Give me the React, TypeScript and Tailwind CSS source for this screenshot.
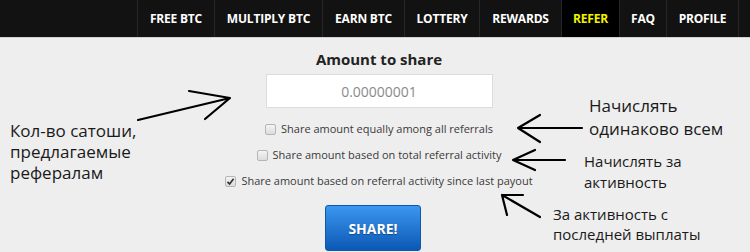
import React from "react";

const navItems: { label: string; w: string; active?: boolean }[] = [
  { label: "FREE BTC", w: "w-[77px]" },
  { label: "MULTIPLY BTC", w: "w-[108px]" },
  { label: "EARN BTC", w: "w-[82px]" },
  { label: "LOTTERY", w: "w-[75px]" },
  { label: "REWARDS", w: "w-[82px]" },
  { label: "REFER", w: "w-[58px]", active: true },
  { label: "FAQ", w: "w-[47px]" },
  { label: "PROFILE", w: "w-[73px]" },
];

function Box({ checked }: { checked?: boolean }) {
  return (
    <span className="relative inline-block w-[11px] h-[11px] rounded-[2px] border border-[#b5b5b5] bg-gradient-to-b from-[#f4f4f4] to-[#dcdcdc] shrink-0">
      {checked && (
        <svg viewBox="0 0 11 11" className="absolute left-[-1px] top-[-1px] w-[11px] h-[11px]">
          <path d="M2.5 5.8 L4.6 8 L8.6 2.8" fill="none" stroke="#333" strokeWidth="1.7" />
        </svg>
      )}
    </span>
  );
}

export default function App() {
  const ff = { fontFamily: '"Open Sans", "Noto Sans", sans-serif' };
  return (
    <div className="relative w-[750px] h-[252px] overflow-hidden bg-[#eeeeee]" style={ff}>
      <nav className="h-[38px] bg-[#121212] border-b border-[#d2d2d2] flex justify-end pr-[11px]">
        {navItems.map((it, i) => (
          <div
            key={it.label}
            className={`${it.w} h-full flex items-center justify-center border-l border-[#262626] ${
              i === navItems.length - 1 ? "border-r" : ""
            } ${it.active ? "bg-black text-[#f2f200]" : "text-white"} text-[12px] font-bold tracking-[-0.2px]`}
          >
            {it.label}
          </div>
        ))}
      </nav>

      <main className="flex flex-col items-center pl-[8px]">
        <h2 className="mt-[11px] text-[15px] leading-[20px] font-bold text-[#222]">Amount to share</h2>
        <div className="mt-[5px] w-[227px] h-[34px] bg-white border border-[#dcdcdc] flex items-center justify-center text-[14px] text-[#8a8a8a]">
          0.00000001
        </div>
        <div className="mt-[8px] flex flex-col items-center text-[11px] text-[#3a3a3a]">
          <label className="h-[26px] flex items-center gap-[5px]">
            <Box />
            <span>Share amount equally among all referrals</span>
          </label>
          <label className="h-[26px] flex items-center gap-[5px]">
            <Box />
            <span>Share amount based on total referral activity</span>
          </label>
          <label className="h-[26px] flex items-center gap-[5px]">
            <Box checked />
            <span>Share amount based on referral activity since last payout</span>
          </label>
        </div>
        <button className="mt-[11px] -ml-[12px] w-[96px] h-[46px] rounded-[3px] border border-[#0c58ad] bg-gradient-to-b from-[#3b97ef] to-[#0a58b5] text-white text-[14px] font-bold [text-shadow:0_1px_1px_rgba(0,0,0,0.35)]">
          SHARE!
        </button>
      </main>

      {/* annotation overlay */}
      <svg className="absolute left-0 top-0 w-[750px] h-[252px] pointer-events-none" viewBox="0 0 750 252">
        <g fill="none" stroke="#000" strokeWidth="2.2" strokeLinecap="round" strokeLinejoin="round">
          <path d="M138 120 L230 98 M189 91 L230 98 L205 119" />
          <path d="M582 128 L518 128 M540 115 L518 128 L540 142" />
          <path d="M565 160 L513 160 M535 150 L513 160 L535 170" />
          <path d="M540 217 L502 195 M523 195 L502 195 L507 215" />
        </g>
      </svg>
      <div className="absolute left-[10px] top-[120px] text-[17px] leading-[21px] text-[#1a1a1a]">
        Кол-во сатоши,
        <br />
        предлагаемые
        <br />
        рефералам
      </div>
      <div className="absolute left-[589px] top-[94px] text-[17px] leading-[23px] text-[#1a1a1a]">
        Начислять
        <br />
        одинаково всем
      </div>
      <div className="absolute left-[584px] top-[151px] text-[15px] leading-[21px] text-[#1a1a1a]">
        Начислять за
        <br />
        активность
      </div>
      <div className="absolute left-[553px] top-[204px] text-[15px] leading-[20px] text-[#1a1a1a]">
        За активность с
        <br />
        последней выплаты
      </div>
    </div>
  );
}
